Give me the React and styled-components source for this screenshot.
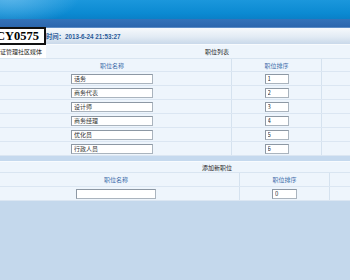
import React from "react";
import styled, { createGlobalStyle } from "styled-components";

const Global = createGlobalStyle`
  html, body { margin: 0; padding: 0; background: #c4d8ec; overflow: hidden; }
  body { font-family: "Noto Sans CJK SC", "Liberation Sans", sans-serif; }
`;

const Page = styled.div`
  position: relative;
  width: 350px;
  height: 280px;
  overflow: hidden;
  background: #c4d8ec;
`;

const Banner = styled.div`
  height: 19px;
  background:
    radial-gradient(ellipse 70px 30px at 10px -4px, rgba(120, 195, 240, 0.7), rgba(120, 195, 240, 0) 100%),
    linear-gradient(180deg, #1b97dc 0%, #0b8ad2 70%, #0a80c8 100%);
`;

const NavBand = styled.div`
  height: 8px;
  background: linear-gradient(180deg, #3473ba 0%, #2c67ae 100%);
  border-bottom: 1px solid #5c8cc6;
`;

const TimeBar = styled.div`
  height: 16px;
  display: flex;
  align-items: center;
  padding-left: 46px;
  background: linear-gradient(180deg, #f6f9fc 0%, #e2ebf4 55%, #c9d9ea 100%);
`;

const TimeText = styled.span`
  font-family: "Liberation Sans", "Noto Sans CJK SC", sans-serif;
  font-weight: bold;
  font-size: 6.3px;
  color: #2a5a98;
  white-space: nowrap;
`;

const LogoBlock = styled.div`
  position: absolute;
  left: 0;
  top: 27px;
  width: 46px;
  background: #fff;
  overflow: hidden;
`;

const LogoBox = styled.div`
  height: 14px;
  margin-left: -6px;
  padding-right: 5px;
  border: 2px solid #111;
  border-left: none;
  background: #fff;
  display: flex;
  align-items: center;
  justify-content: flex-end;
  font-family: "Liberation Serif", serif;
  font-weight: bold;
  font-size: 12.5px;
  color: #000;
  line-height: 1;
  white-space: nowrap;
`;

const LogoSub = styled.div`
  height: 13px;
  display: flex;
  align-items: center;
  font-size: 6px;
  color: #222;
  white-space: nowrap;
  overflow: hidden;
`;

const Table = styled.div`
  width: 448px;
  margin-left: -7px;
  background: #eef5fc;
`;

const TitleRow = styled.div`
  height: ${(p) => p.$h}px;
  display: flex;
  align-items: center;
  justify-content: center;
  font-size: 6px;
  color: #222;
  border-top: 1px solid #f8fbfe;
  border-bottom: 1px solid #d9e5f1;
  box-sizing: border-box;
`;

const Row = styled.div`
  display: grid;
  grid-template-columns: ${(p) => p.$cols};
  height: ${(p) => p.$h}px;
  border-bottom: 1px solid #dbe6f2;
  box-sizing: border-box;
`;

const Cell = styled.div`
  display: flex;
  align-items: center;
  justify-content: center;
  border-right: 1px solid #d5e2ef;
  font-size: 6px;
  color: ${(p) => (p.$head ? "#3a6aa8" : "#222")};
`;

const Field = styled.input`
  box-sizing: border-box;
  width: ${(p) => p.$w}px;
  height: 10px;
  padding: 0 2px;
  margin: 0;
  border: 1px solid #aab4be;
  border-top-color: #8d98a4;
  border-left-color: #8d98a4;
  background: #fff;
  font-family: "Noto Sans CJK SC", "Liberation Sans", sans-serif;
  font-size: 6px;
  color: #333;
  outline: none;
`;

const Band = styled.div`
  height: 5px;
  background: #c5d9ee;
`;

const positions = [
  ["话务", "1"],
  ["商务代表", "2"],
  ["设计师", "3"],
  ["商务经理", "4"],
  ["优化员", "5"],
  ["行政人员", "6"],
];

const LIST_COLS = "239px 90px 1fr";
const ADD_COLS = "247px 90px 1fr";

export default function App() {
  return (
    <>
      <Global />
      <Page>
        <Banner />
        <NavBand />
        <TimeBar>
          <TimeText>时间：2013-6-24 21:53:27</TimeText>
        </TimeBar>
        <Table>
          <TitleRow $h={15}>职位列表</TitleRow>
          <Row $cols={LIST_COLS} $h={13}>
            <Cell $head>职位名称</Cell>
            <Cell $head>职位排序</Cell>
            <Cell />
          </Row>
          {positions.map(([name, order]) => (
            <Row key={name} $cols={LIST_COLS} $h={14}>
              <Cell>
                <Field $w={82} defaultValue={name} readOnly />
              </Cell>
              <Cell>
                <Field $w={24} defaultValue={order} readOnly />
              </Cell>
              <Cell />
            </Row>
          ))}
        </Table>
        <Band />
        <Table>
          <TitleRow $h={12}>添加新职位</TitleRow>
          <Row $cols={ADD_COLS} $h={14}>
            <Cell $head>职位名称</Cell>
            <Cell $head>职位排序</Cell>
            <Cell />
          </Row>
          <Row $cols={ADD_COLS} $h={14}>
            <Cell>
              <Field $w={80} defaultValue="" readOnly />
            </Cell>
            <Cell>
              <Field $w={25} defaultValue="0" readOnly />
            </Cell>
            <Cell />
          </Row>
        </Table>
        <LogoBlock>
          <LogoBox>CY0575</LogoBox>
          <LogoSub>证管理社区媒体</LogoSub>
        </LogoBlock>
      </Page>
    </>
  );
}
